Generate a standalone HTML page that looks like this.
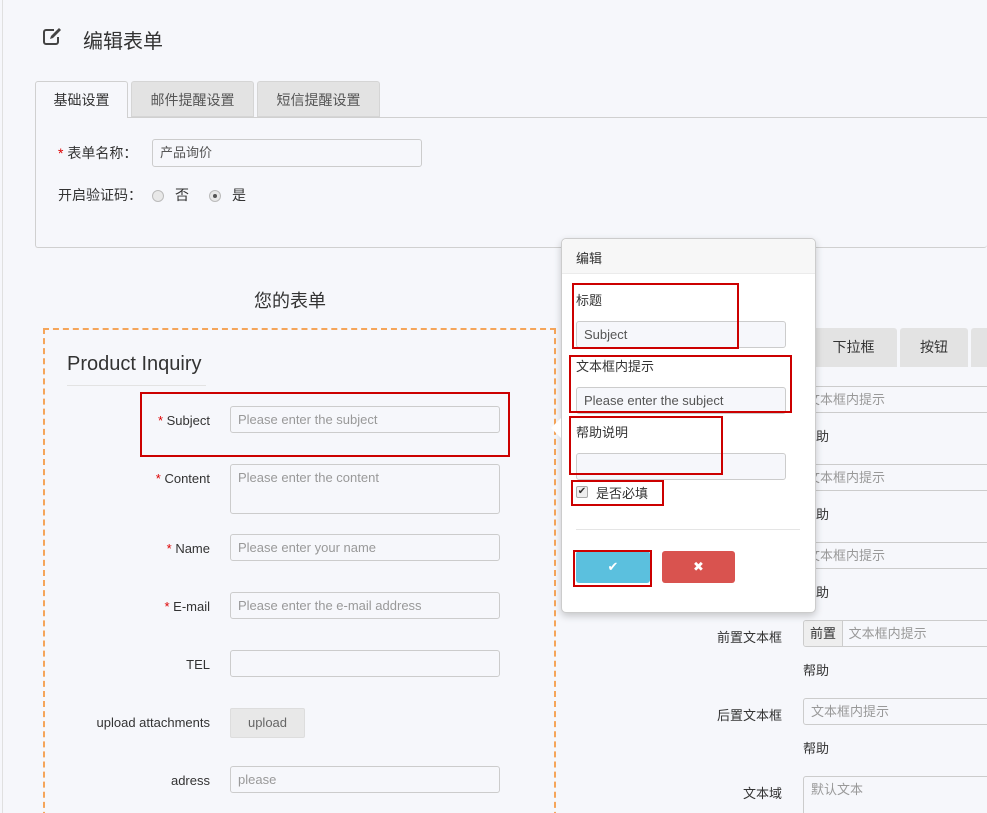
<!DOCTYPE html>
<html><head><meta charset="utf-8"><style>
*{box-sizing:border-box;margin:0;padding:0}
html,body{width:987px;height:813px;overflow:hidden}
body{background:#f6f7fb;font-family:"Liberation Sans","Noto Sans CJK SC",sans-serif;font-size:13px;color:#333;position:relative}
.a{position:absolute}
.inp{position:absolute;border:1px solid #ccc;border-radius:3px;background:#f6f7fb;color:#999;font-size:13px;padding:0 7px;line-height:25px;height:27px;white-space:nowrap;overflow:hidden}
.lbl{position:absolute;text-align:right;font-size:13px;color:#333}
.red{color:#d00}
.rb{position:absolute;border:2px solid #c00}
</style></head><body>
<div class="a" style="left:2px;top:0;width:1px;height:813px;background:#e0e0e0"></div>
<svg class="a" style="left:42px;top:27px" width="22" height="20" viewBox="0 0 22 20"><path d="M12 3H4a2 2 0 0 0-2 2v10a2 2 0 0 0 2 2h10a2 2 0 0 0 2-2V10" fill="none" stroke="#444" stroke-width="2"/><path d="M8 12l1-3 8-8 2 2-8 8z" fill="#444"/></svg>
<div class="a" style="left:83px;top:25px;font-size:20px;color:#333">编辑表单</div>
<div class="a" style="left:35px;top:117px;width:952px;height:131px;border:1px solid #d0d0d0;border-right:none;border-radius:0 0 3px 3px"></div>
<div class="a" style="left:35px;top:81px;width:93px;height:37px;border:1px solid #d0d0d0;border-bottom:none;border-radius:3px 3px 0 0;background:#f6f7fb;text-align:center;line-height:36px;font-size:14px;color:#333">基础设置</div>
<div class="a" style="left:131px;top:81px;width:123px;height:36px;background:#e3e3e3;border:1px solid #d5d5d5;border-radius:3px 3px 0 0;text-align:center;line-height:36px;font-size:14px;color:#555">邮件提醒设置</div>
<div class="a" style="left:257px;top:81px;width:123px;height:36px;background:#e3e3e3;border:1px solid #d5d5d5;border-radius:3px 3px 0 0;text-align:center;line-height:36px;font-size:14px;color:#555">短信提醒设置</div>
<div class="a" style="left:58px;top:143px;font-size:14px"><span class="red">*</span> 表单名称：</div>
<div class="inp" style="left:152px;top:139px;width:270px;height:28px;color:#555;line-height:26px">产品询价</div>
<div class="a" style="left:58px;top:185px;font-size:14px">开启验证码：</div>
<div class="a" style="left:152px;top:190px;width:12px;height:12px;border-radius:50%;border:1px solid #bbb;background:#e8e8e8"></div>
<div class="a" style="left:175px;top:185px;font-size:14px">否</div>
<div class="a" style="left:209px;top:190px;width:12px;height:12px;border-radius:50%;border:1px solid #bbb;background:#e8e8e8"><div style="margin:3px;width:4px;height:4px;border-radius:50%;background:#555"></div></div>
<div class="a" style="left:232px;top:185px;font-size:14px">是</div>

<div class="a" style="left:254px;top:287px;font-size:18px;color:#333">您的表单</div>
<div class="a" style="left:43px;top:328px;width:513px;height:500px;border:2px dashed #f5a55a"></div>
<div class="a" style="left:67px;top:353px;font-size:20px;color:#333">Product Inquiry</div>
<div class="a" style="left:67px;top:385px;width:139px;height:1px;background:#e3e3e3"></div>

<div class="lbl" style="left:60px;top:413px;width:150px"><span class="red">*</span> Subject</div>
<div class="inp" style="left:230px;top:406px;width:270px">Please enter the subject</div>
<div class="rb" style="left:140px;top:392px;width:370px;height:65px"></div>
<div class="lbl" style="left:60px;top:471px;width:150px"><span class="red">*</span> Content</div>
<div class="inp" style="left:230px;top:464px;width:270px;height:50px">Please enter the content</div>
<div class="lbl" style="left:60px;top:541px;width:150px"><span class="red">*</span> Name</div>
<div class="inp" style="left:230px;top:534px;width:270px">Please enter your name</div>
<div class="lbl" style="left:60px;top:599px;width:150px"><span class="red">*</span> E-mail</div>
<div class="inp" style="left:230px;top:592px;width:270px">Please enter the e-mail address</div>
<div class="lbl" style="left:60px;top:657px;width:150px">TEL</div>
<div class="inp" style="left:230px;top:650px;width:270px"></div>
<div class="lbl" style="left:40px;top:715px;width:170px">upload attachments</div>
<div class="a" style="left:230px;top:708px;width:75px;height:30px;background:#e8e8e8;border:1px solid #ddd;border-radius:2px;text-align:center;line-height:28px;color:#666">upload</div>
<div class="lbl" style="left:60px;top:773px;width:150px">adress</div>
<div class="inp" style="left:230px;top:766px;width:270px">please</div>

<div class="a" style="left:780px;top:328px;width:117px;height:39px;background:#e3e3e3;border-radius:3px 3px 0 0;text-align:center;line-height:38px;font-size:14px;padding-left:30px">下拉框</div>
<div class="a" style="left:900px;top:328px;width:68px;height:39px;background:#e3e3e3;border-radius:3px 3px 0 0;text-align:center;line-height:38px;font-size:14px">按钮</div>
<div class="a" style="left:971px;top:328px;width:20px;height:39px;background:#e3e3e3;border-radius:3px 3px 0 0"></div>
<div class="inp" style="left:790px;top:386px;width:210px;padding-left:16px">文本框内提示</div>
<div class="a" style="left:803px;top:426px">帮助</div>
<div class="inp" style="left:790px;top:464px;width:210px;padding-left:16px">文本框内提示</div>
<div class="a" style="left:803px;top:504px">帮助</div>
<div class="inp" style="left:790px;top:542px;width:210px;padding-left:16px">文本框内提示</div>
<div class="a" style="left:803px;top:582px">帮助</div>
<div class="lbl" style="left:680px;top:627px;width:102px">前置文本框</div>
<div class="inp" style="left:803px;top:620px;width:200px;padding:0"><span style="display:inline-block;background:#eee;color:#333;padding:0 6px;border-right:1px solid #ccc;height:26px">前置</span> <span style="padding-left:2px">文本框内提示</span></div>
<div class="a" style="left:803px;top:660px">帮助</div>
<div class="lbl" style="left:680px;top:705px;width:102px">后置文本框</div>
<div class="inp" style="left:803px;top:698px;width:200px">文本框内提示</div>
<div class="a" style="left:803px;top:738px">帮助</div>
<div class="lbl" style="left:680px;top:783px;width:102px">文本域</div>
<div class="inp" style="left:803px;top:776px;width:200px;height:50px">默认文本</div>

<div class="a" style="left:561px;top:238px;width:255px;height:375px;background:#fff;border:1px solid #ccc;border-radius:5px;box-shadow:0 3px 8px rgba(0,0,0,.2)">
 <div style="height:35px;background:#f7f7f7;border-bottom:1px solid #ebebeb;border-radius:5px 5px 0 0;padding:9px 14px;font-size:13px">编辑</div>
</div>
<div class="a" style="left:551px;top:418px;width:0;height:0;border:10px solid transparent;border-right-color:#fff;border-left:none"></div>
<div class="a" style="left:576px;top:290px;font-size:13px">标题</div>
<div class="inp" style="left:576px;top:321px;width:210px;color:#555">Subject</div>
<div class="rb" style="left:572px;top:283px;width:167px;height:66px"></div>
<div class="a" style="left:576px;top:356px;font-size:13px">文本框内提示</div>
<div class="inp" style="left:576px;top:387px;width:210px;color:#555">Please enter the subject</div>
<div class="rb" style="left:569px;top:355px;width:223px;height:58px"></div>
<div class="a" style="left:576px;top:422px;font-size:13px">帮助说明</div>
<div class="inp" style="left:576px;top:453px;width:210px"></div>
<div class="rb" style="left:569px;top:416px;width:154px;height:59px"></div>
<div class="a" style="left:576px;top:486px;width:12px;height:12px;border:1px solid #aaa;border-radius:2px;background:#eee;font-size:10px;line-height:10px;text-align:center">✔</div>
<div class="a" style="left:596px;top:483px;font-size:13px">是否必填</div>
<div class="rb" style="left:571px;top:480px;width:93px;height:26px"></div>
<div class="a" style="left:576px;top:529px;width:224px;height:1px;background:#e5e5e5"></div>
<div class="a" style="left:576px;top:551px;width:74px;height:32px;background:#5bc0de;border-radius:3px;color:#fff;text-align:center;line-height:32px;font-size:13px">✔</div>
<div class="rb" style="left:573px;top:550px;width:79px;height:37px"></div>
<div class="a" style="left:662px;top:551px;width:73px;height:32px;background:#d9534f;border-radius:3px;color:#fff;text-align:center;line-height:32px;font-size:13px">✖</div>
</body></html>
